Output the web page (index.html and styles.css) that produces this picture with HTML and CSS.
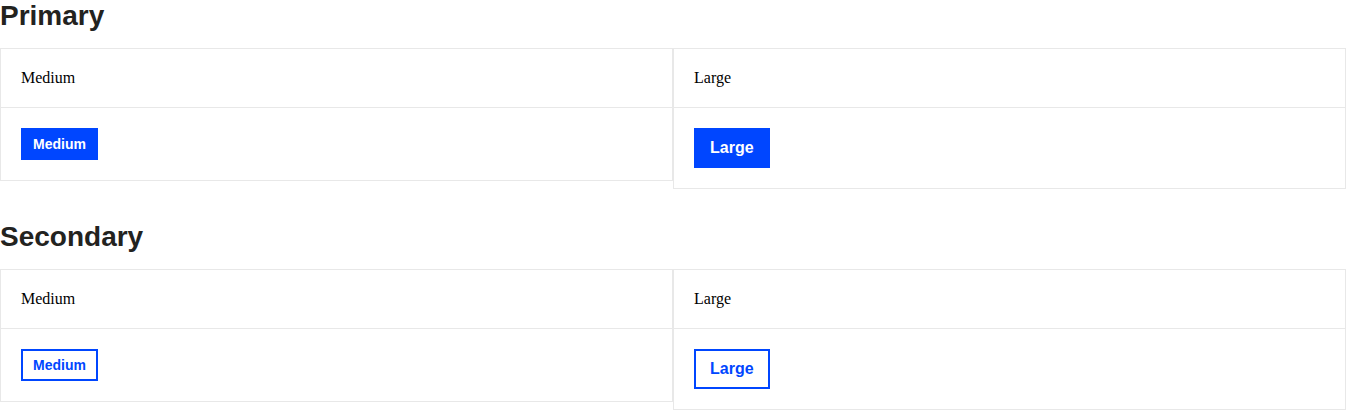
FILE: index.html
```html
<!DOCTYPE html>
<html>
<head>
<meta charset="utf-8">
<link rel="stylesheet" href="styles.css">
</head>
<body>
<section class="section">
  <h2 class="section-title">Primary</h2>
  <div class="row">
    <div class="card">
      <div class="card-header">Medium</div>
      <div class="card-body"><button class="btn btn-primary btn-md">Medium</button></div>
    </div>
    <div class="card">
      <div class="card-header">Large</div>
      <div class="card-body"><button class="btn btn-primary btn-lg">Large</button></div>
    </div>
  </div>
</section>
<section class="section">
  <h2 class="section-title">Secondary</h2>
  <div class="row">
    <div class="card">
      <div class="card-header">Medium</div>
      <div class="card-body"><button class="btn btn-secondary btn-md">Medium</button></div>
    </div>
    <div class="card">
      <div class="card-header">Large</div>
      <div class="card-body"><button class="btn btn-secondary btn-lg">Large</button></div>
    </div>
  </div>
</section>
</body>
</html>
```
FILE: styles.css
```css
html, body {
  margin: 0;
  padding: 0;
  background: #ffffff;
}
body {
  font-family: "Liberation Serif", serif;
  font-size: 16px;
  color: #000;
}
.section + .section {
  margin-top: 32px;
}
.section-title {
  margin: 0 0 16px 0;
  font-family: "Liberation Sans", Arial, sans-serif;
  font-size: 28px;
  font-weight: bold;
  line-height: 32px;
  color: #23231f;
}
.row {
  display: flex;
  align-items: flex-start;
}
.card {
  flex: 1 1 0;
  border: 1px solid #e8e8e8;
  box-sizing: border-box;
}
.card-header {
  padding: 20px;
  line-height: 18px;
  border-bottom: 1px solid #e8e8e8;
}
.card-body {
  padding: 20px;
  display: flex;
}
.btn {
  font-family: "Liberation Sans", Arial, sans-serif;
  font-weight: bold;
  border: 2px solid #0046ff;
  box-sizing: border-box;
  margin: 0;
  cursor: pointer;
}
.btn-md {
  height: 32px;
  padding: 0 10px;
  font-size: 14px;
  line-height: 28px;
}
.btn-lg {
  height: 40px;
  padding: 0 14px;
  font-size: 16px;
  line-height: 36px;
}
.btn-primary {
  background: #0046ff;
  color: #ffffff;
}
.btn-secondary {
  background: #ffffff;
  color: #0046ff;
}
```
